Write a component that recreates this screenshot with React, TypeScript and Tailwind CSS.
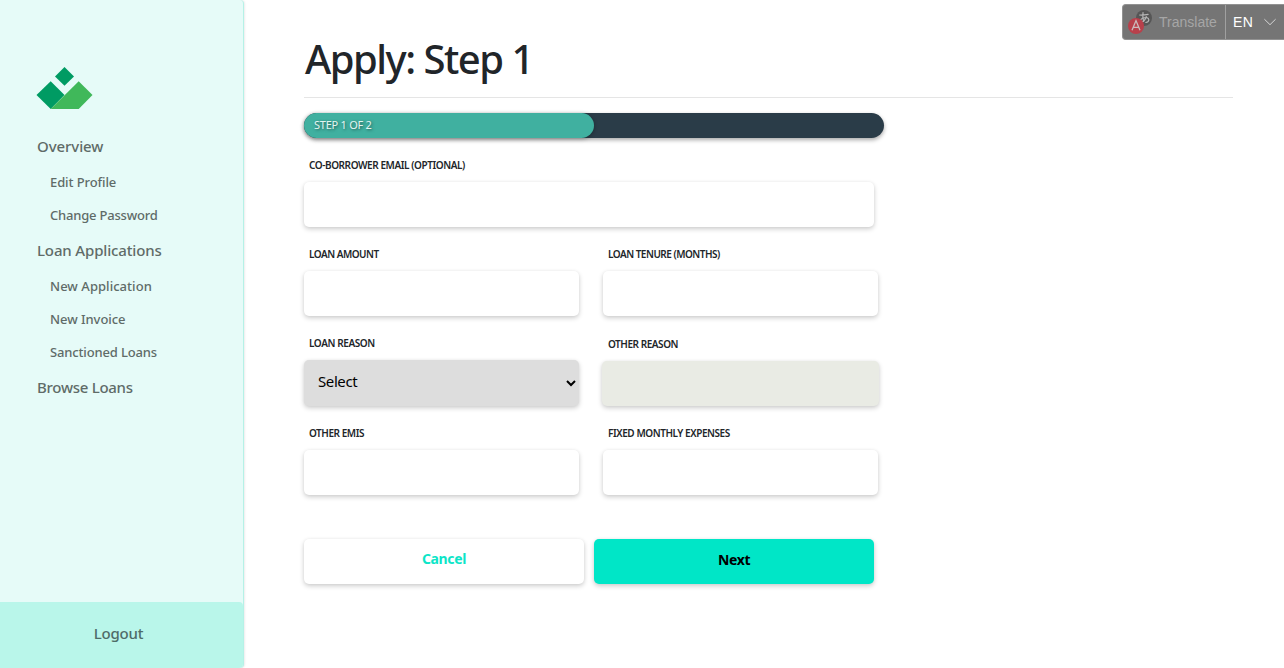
import type { ReactNode } from "react";

const shadow = "shadow-[0_2px_5px_rgba(0,0,0,0.2),0_0_3px_rgba(0,0,0,0.04)]";

function Logo() {
  return (
    <svg className="block h-[42px] w-[57px]" viewBox="0 0 57 42">
      <path d="M28.5 0 38 9.4 28.5 18.8 19 9.4Z" fill="#009b63" />
      <path d="M14.7 14.2 28.5 28 14.7 42 .5 28Z" fill="#009b63" />
      <path d="M42.7 14.2 56.5 28 42.7 42h-28Z" fill="#40b85a" />
    </svg>
  );
}

function MainLink({ children, className }: { children: ReactNode; className: string }) {
  return (
    <a className={`flex h-9 items-center pb-px text-[15px] font-medium ${className}`} href="#">
      {children}
    </a>
  );
}

function SubLink({ children, className }: { children: ReactNode; className: string }) {
  return (
    <a className={`flex h-[33px] items-center pt-0.5 pl-[13px] text-[13px] font-medium ${className}`} href="#">
      {children}
    </a>
  );
}

function Sidebar() {
  return (
    <aside className="flex w-[244px] shrink-0 flex-col rounded-r-sm border-r border-[#b5f2e7] bg-[#e6fbf8] text-[#5f6b68] shadow-[1px_0_2px_rgba(0,0,0,0.08)]">
      <div className="pt-[67px] pl-9">
        <Logo />
      </div>
      <nav className="mt-5 flex flex-col pl-[37px]">
        <MainLink className="tracking-[-0.08px]">Overview</MainLink>
        <SubLink className="tracking-[-0.1px]">Edit Profile</SubLink>
        <SubLink className="tracking-[-0.2px]">Change Password</SubLink>
        <MainLink className="mt-[2px] tracking-[-0.15px]">Loan Applications</MainLink>
        <SubLink className="tracking-[0.04px]">New Application</SubLink>
        <SubLink className="tracking-[-0.05px]">New Invoice</SubLink>
        <SubLink className="tracking-[-0.15px]">Sanctioned Loans</SubLink>
        <MainLink className="mt-[2px] tracking-[-0.28px]">Browse Loans</MainLink>
      </nav>
      <a
        href="#"
        className="mt-auto flex h-[66px] items-center justify-center rounded-r-sm bg-[#b9f6ea] pr-1.5 pb-[3px] text-[15px] font-medium tracking-[-0.25px] text-[#4f6c68]"
      >
        Logout
      </a>
    </aside>
  );
}

function Field({ label, labelClass, wide }: { label: string; labelClass: string; wide?: boolean }) {
  return (
    <label className={wide ? "block w-[570px]" : "block w-[275px]"}>
      <span className={`block h-7 pl-[5px] text-[10px] font-semibold uppercase ${labelClass}`}>{label}</span>
      <input className={`block h-[45px] w-full rounded-[5px] bg-white px-3.5 outline-none ${shadow}`} />
    </label>
  );
}

function TranslateWidget() {
  return (
    <div className="absolute top-1 right-0 flex h-9 w-[162px] items-center rounded-l-sm border border-r-0 border-[#929292] bg-[#757575] font-['Liberation_Sans',sans-serif] text-[14px]">
      <div className="flex h-full w-[103px] items-center border-r border-[#a0a0a0] pl-[5px] text-[#a6a6a6]">
        <svg className="mr-[7px] h-6 w-6 shrink-0" viewBox="0 0 24 24" fill="none">
          <circle cx="16" cy="8" r="8" fill="#565656" />
          <g stroke="#b5b5b5" strokeWidth="1.2" strokeLinecap="round">
            <path d="M11.7 5c2.9.2 5.6-.1 8.4-.6M15 2.7c-.4 3.2-.3 5.7.6 8.8" />
            <path d="M18.3 6.5c-.9 3-3 5.4-4.8 5.4-1.7 0-1.4-2.6 1-3.7 2.8-1.3 6.3-.8 6.3 1.5 0 1.6-1.2 2.5-3 2.8" />
          </g>
          <circle cx="8" cy="16" r="8" fill="#b8404b" />
          <path d="m4 20.2 4-9.6 4 9.6M5.3 17.3h5.4" stroke="#cbbbbd" strokeWidth="1.3" />
        </svg>
        <span>Translate</span>
      </div>
      <span className="ml-[7px] tracking-[0.3px] text-white">EN</span>
      <svg className="ml-[11px] h-2 w-3 shrink-0" viewBox="0 0 12 8" fill="none" stroke="#d5d5d5">
        <path d="m.4 1.2 5.6 5.5 5.6-5.5" />
      </svg>
    </div>
  );
}

export default function App() {
  return (
    <div className="relative flex h-[668px] w-full overflow-hidden bg-white font-['Noto_Sans',sans-serif] text-[#212529]">
      <Sidebar />
      <main className="flex-1 pt-[35px] pr-[51px] pl-[60px]">
        <h1 className="h-[62px] pl-px text-[40px] leading-[48px] font-medium tracking-[-1.5px]">
          Apply: Step 1
        </h1>
        <hr className="border-t border-[#e5e5e5]" />

        <div className="mt-[15px] h-[25px] w-[580px] rounded-full bg-[#2a3c48] shadow-[0_2px_4px_rgba(0,0,0,0.35)]">
          <div className="h-full w-1/2 rounded-full bg-[#40b0a0] pl-2.5 text-[11px] leading-6 tracking-[-0.25px] text-[#e2f5f1] shadow-[0_1px_4px_rgba(0,0,0,0.3)] [text-shadow:1px_1px_3px_rgba(0,0,0,0.5)]">
            STEP 1 OF 2
          </div>
        </div>

        <form className="mt-4" onSubmit={(event) => event.preventDefault()}>
          <Field label="Co-borrower Email (Optional)" labelClass="leading-[22px] tracking-[-0.42px]" wide />
          <div className="mt-4 flex gap-6">
            <Field label="Loan Amount" labelClass="leading-[22px] tracking-[-0.5px]" />
            <Field label="Loan Tenure (Months)" labelClass="leading-[22px] tracking-[-0.5px]" />
          </div>
          <div className="mt-[15px] flex gap-[23px]">
            <label className="block w-[275px]">
              <span className="block h-[29px] pl-[5px] text-[10px] leading-6 font-semibold tracking-[-0.4px] uppercase">
                Loan Reason
              </span>
              <select
                className={`block h-[46px] w-full rounded-[5px] bg-[#dddddd] pr-0 pb-1 pl-2.5 text-[15px] tracking-[-0.4px] text-black ${shadow}`}
                defaultValue="Select"
              >
                <option>Select</option>
              </select>
            </label>
            <label className="block w-[277px] pt-px">
              <span className="block h-[29px] pl-[6px] text-[10px] leading-6 font-semibold tracking-[-0.45px] uppercase">
                Other Reason
              </span>
              <input disabled className={`block h-[45px] w-full rounded-[5px] bg-[#e9ebe4] ${shadow}`} />
            </label>
          </div>
          <div className="mt-4 flex gap-6">
            <Field label="Other EMIs" labelClass="leading-[22px] tracking-[-0.45px]" />
            <Field label="Fixed Monthly Expenses" labelClass="leading-[22px] tracking-[-0.43px]" />
          </div>
          <div className="mt-11 flex gap-2.5">
            <button
              type="button"
              className={`h-[45px] w-[280px] rounded-[5px] bg-white pb-1.5 text-[14px] font-bold tracking-[-0.35px] text-[#0ce5c8] ${shadow}`}
            >
              Cancel
            </button>
            <button
              type="submit"
              className={`h-[45px] w-[280px] rounded-[5px] bg-[#00e6c7] pb-1 text-[14px] font-bold tracking-[-0.35px] text-black ${shadow}`}
            >
              Next
            </button>
          </div>
        </form>
      </main>
      <TranslateWidget />
    </div>
  );
}
